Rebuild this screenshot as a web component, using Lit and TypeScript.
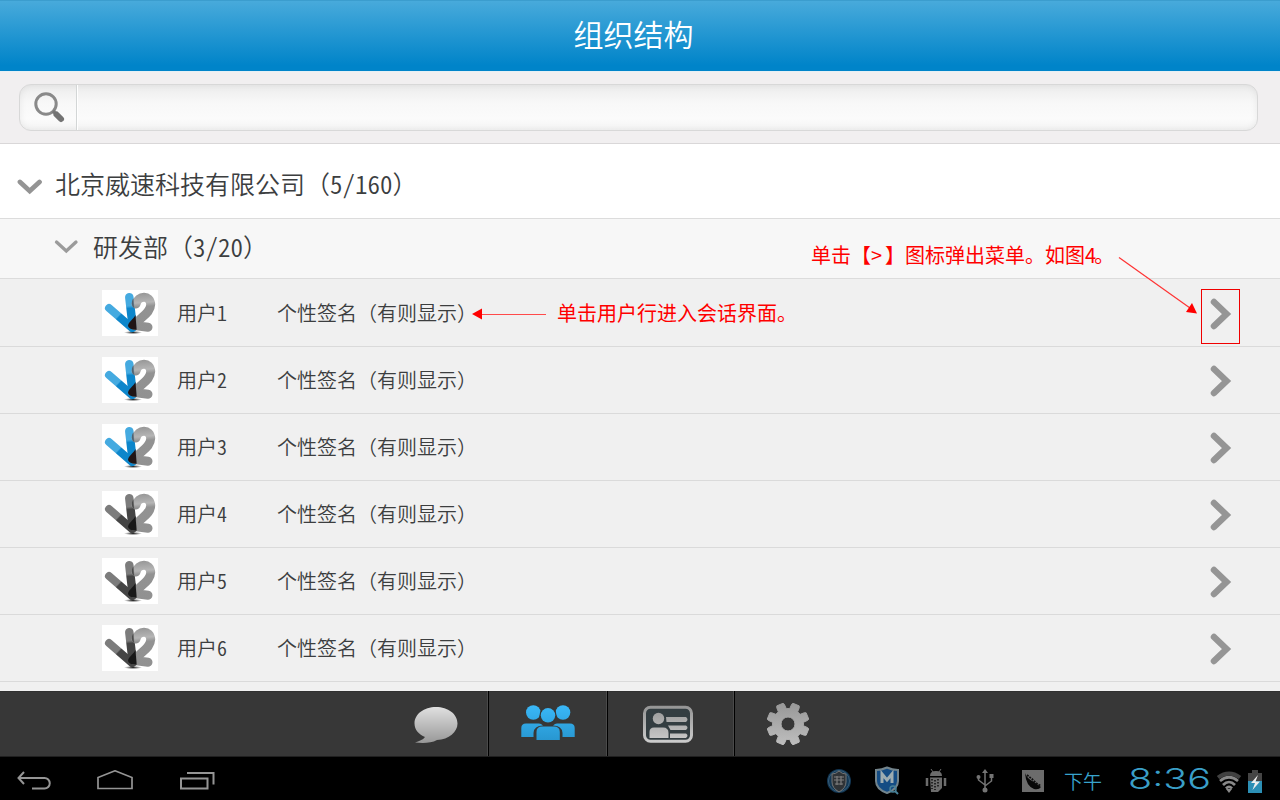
import { LitElement, html, css } from "lit";
import { customElement, property } from "lit/decorators.js";

@customElement("v2-logo")
class V2Logo extends LitElement {
  @property({ type: Boolean }) online = false;
  static styles = css`:host { display: block; width: 56px; height: 46px; background: #fff; } svg { display: block; }`;
  render() {
    const a = this.online ? "#45aae0" : "#7c7c7c";
    const b = this.online ? "#0d86cb" : "#454545";
    return html`<svg width="56" height="46" viewBox="0 0 56 46" fill="none" stroke-linecap="round" stroke-linejoin="round">
      <defs>
        <linearGradient id="l" gradientUnits="userSpaceOnUse" x1="6" y1="17" x2="29" y2="39">
          <stop offset=".42" stop-color=${a} /><stop offset=".47" stop-color=${b} />
        </linearGradient>
        <linearGradient id="r" gradientUnits="userSpaceOnUse" x1="26" y1="4" x2="29" y2="40">
          <stop offset=".33" stop-color=${a} /><stop offset=".4" stop-color=${b} />
        </linearGradient>
        <linearGradient id="g" gradientUnits="userSpaceOnUse" x1="40" y1="3" x2="43" y2="41">
          <stop offset="0" stop-color="#8c8c8c" /><stop offset=".25" stop-color="#adadad" />
          <stop offset=".36" stop-color="#868686" /><stop offset="1" stop-color="#858585" />
        </linearGradient>
        <radialGradient id="s"><stop offset="0" stop-color="#222" /><stop offset="1" stop-color="#222" stop-opacity="0" /></radialGradient>
      </defs>
      <ellipse cx="31" cy="42.500" rx="9" ry="1.600" fill="url(#s)" />
      <path d="M7 18L30 38" stroke="url(#l)" stroke-width="8" />
      <path d="M27.300 7.200L30.800 37.500" stroke="url(#r)" stroke-width="8.500" />
      <path d="M34 14C36 5.500 48.300 4.500 48.700 14.500C48.500 23.500 38 27 32.500 35.500L46 37.200" stroke="url(#g)" stroke-width="9" opacity=".9" />
      <path d="M29.800 13.500C29.900 10.500 30.600 9.200 31.400 8.500L32 18Q29.800 16.500 29.800 13.500Z" fill=${this.online ? "#4d6272" : "#4c4c4c"} />
      <path d="M33.500 25C31.500 29 26 32.500 26 36Q27 39.800 34.600 39.700Z" fill=${this.online ? "#201516" : "#181818"} />
    </svg>`;
  }
}

@customElement("user-row")
class UserRow extends LitElement {
  @property() name = "";
  @property() num = "";
  @property({ type: Boolean }) online = false;
  static styles = css`
    :host { display: flex; align-items: center; box-sizing: border-box; height: 67px; padding: 0 48px 0 102px; border-bottom: 1px solid #dadada; }
    .name { width: 100px; margin-left: 19px; }
    .sign { flex: 1; }
    .name, .sign { font-size: 20px; font-weight: 350; line-height: 28px; color: #3c3e3f; white-space: nowrap; }
    .half { font-feature-settings: "hwid"; }
    svg { display: block; margin-top: 2px; }
  `;
  render() {
    return html`<v2-logo ?online=${this.online}></v2-logo>
      <div class="name">${this.name}<span class="half">${this.num}</span></div>
      <div class="sign">个性签名（有则显示）</div>
      <svg width="22" height="32" viewBox="0 0 22 32" fill="none"><path d="M4 4L16.500 16L4 28" stroke="#959595" stroke-width="6.500" stroke-linecap="round" /></svg>`;
  }
}

const gear = () => {
  const pts: string[] = [];
  for (let i = 0; i < 8; i++) {
    const c = 22.5 + i * 45;
    for (const [d, r] of [[-16, 15.5], [-12, 20], [-9, 21.3], [9, 21.3], [12, 20], [16, 15.5]]) {
      const t = ((c + d) * Math.PI) / 180;
      pts.push(`${(22 + r * Math.sin(t)).toFixed(2)} ${(22 - r * Math.cos(t)).toFixed(2)}`);
    }
  }
  return "M" + pts.join("L") + "ZM29 22a7 7 0 1 0-14 0a7 7 0 1 0 14 0Z";
};

@customElement("app-root")
class AppRoot extends LitElement {
  static styles = css`
    :host { display: flex; flex-direction: column; position: relative; width: 1280px; height: 800px; overflow: hidden; background: #f0f0f0; font-family: "Noto Sans CJK SC", sans-serif; font-weight: 400; }
    * { box-sizing: border-box; }
    svg { display: block; }
    header { height: 71px; flex: none; background: linear-gradient(#48aadb, #0084c9 92%); border-top: 1px solid #3b9dce; color: #fff; font-size: 30px; font-weight: 350; line-height: 64px; text-align: center; padding-right: 13px; }
    .search { height: 73px; flex: none; background: #f1eff0; padding: 12px 22px 12px 19px; border-bottom: 1px solid #d9d7d8; border-top: 1px solid #e5f0f5; }
    .box { display: flex; height: 47px; width: 1239px; border: 1px solid #d8d8d8; border-radius: 12px; background: linear-gradient(#ececec, #f8f8f8 40%, #fbfbfb 75%, #f4f4f4); box-shadow: inset 0 0 7px rgba(0,0,0,.07); }
    .glass { width: 57px; border-right: 1px solid #d3d6d6; padding: 7px 0 0 14px; }
    .gap { border-left: 1px solid #fff; flex: 1; }
    .company, .dept { display: flex; align-items: center; font-size: 25px; font-weight: 350; color: #3c3e3f; border-bottom: 1px solid #dcdcdc; flex: none; white-space: nowrap; }
    .half { font-feature-settings: "hwid"; }
    .company { height: 75px; background: #fff; padding: 3px 0 0 17px; }
    .company svg { margin-top: 9px; }
    .label { margin-left: 12px; }
    .dept { height: 60px; background: #f7f7f7; padding: 0 0 6px 54px; }
    .dept svg { margin-top: 3px; }
    .dept .label { margin-left: 14px; }
    .rows { flex: 1; min-height: 0; padding-top: 1px; }
    .tabs { height: 66px; flex: none; display: flex; background: #373737; padding-left: 383px; border-bottom: 1px solid #202020; box-shadow: inset 0 1px #303030; }
    .tab { display: flex; align-items: center; justify-content: center; border-right: 1px solid #000; box-shadow: inset -1px 0 #4a4a4a; }
    .tab:last-child { border: 0; box-shadow: none; }
    .chat { width: 106px; padding-top: 2px; }
    .people { width: 119px; padding-bottom: 4px; }
    .card { width: 127px; padding-right: 7px; }
    .gear { width: 106px; padding-top: 1px; }
    .sys { height: 43px; flex: none; background: #000; display: flex; align-items: center; padding: 6px 17px 0 16px; }
    .sp { flex: 1; }
    .status { margin-bottom: 2px; opacity: .88; }
    .ampm { font-size: 19px; line-height: 28px; color: #38a3cc; font-weight: 350; width: 39px; margin: 0 26px 2px 19px; white-space: nowrap; }
    .note { position: absolute; color: #f00; font-size: 20px; line-height: 28px; white-space: nowrap; }
    .gt { letter-spacing: 3px; }
    .four { letter-spacing: -2px; }
    .n1 { left: 811px; top: 241px; }
    .n2 { left: 557px; top: 299px; }
    .over { position: absolute; left: 0; top: 0; pointer-events: none; }
  `;
  render() {
    return html`
      <header>组织结构</header>
      <div class="search"><div class="box">
        <div class="glass"><svg width="32" height="32" viewBox="0 0 32 32" fill="none">
          <circle cx="12" cy="12" r="10.200" stroke="#898989" stroke-width="3" />
          <path d="M19 19L22 22" stroke="#777" stroke-width="3.200" />
          <path d="M22.500 22.500L27 27" stroke="#737373" stroke-width="6" stroke-linecap="round" /></svg></div>
        <div class="gap"></div>
      </div></div>
      <div class="company"><svg width="26" height="18" viewBox="0 0 26 18" fill="none"><path d="M3 4L12.700 13L22.500 4" stroke="#949494" stroke-width="4.800" stroke-linecap="round" /></svg><span class="label">北京威速科技有限公司（<span class="half">5/160</span>）</span></div>
      <div class="dept"><svg width="25" height="18" viewBox="0 0 25 18" fill="none"><path d="M2.500 4L12.300 13L22 4" stroke="#9b9b9b" stroke-width="3.300" stroke-linecap="round" /></svg><span class="label">研发部（<span class="half">3/20</span>）</span></div>
      <div class="rows">${[1, 2, 3, 4, 5, 6].map((n) => html`<user-row .name=${"用户"} .num=${String(n)} .online=${n < 4}></user-row>`)}</div>
      <div class="tabs">
        <div class="tab chat"><svg width="44" height="38" viewBox="0 0 44 38"><defs><linearGradient id="cg" x1="0" y1="0" x2="0" y2="1"><stop stop-color="#e0e0e0" /><stop offset="1" stop-color="#989898" /></linearGradient></defs>
          <path d="M22 1C10 1 .500 8 .500 17.500C.500 24 5 28.500 11 31C9 34 5 35 1 36.500C8 37.300 17 37.500 23 34C35 33.500 43.500 26 43.500 17.500C43.500 8 34 1 22 1Z" fill="url(#cg)" /></svg></div>
        <div class="tab people"><svg width="54" height="38" viewBox="0 0 54 38"><defs><linearGradient id="pg" gradientUnits="userSpaceOnUse" x1="0" y1="0" x2="0" y2="38"><stop stop-color="#3bbafa" /><stop offset="1" stop-color="#2796d0" /></linearGradient></defs>
          <g fill="url(#pg)"><circle cx="12.300" cy="9.500" r="7.300" /><circle cx="42" cy="9.500" r="7.300" />
          <path d="M.300 34V25Q.300 20.500 5 20.500H18Q20 20.500 22 22.500Q13 22.500 12.500 30V34ZM53.700 34V25Q53.700 20.500 49 20.500H36Q34 20.500 32 22.500Q41 22.500 41.500 30V34Z" />
          <circle cx="27" cy="12.300" r="8.500" fill="#373737" /><circle cx="27" cy="12.300" r="7.200" />
          <path d="M15.500 37V29Q15.500 23.500 21 23.500H33Q38.800 23.500 38.800 29V37Z" /></g></svg></div>
        <div class="tab card"><svg width="50" height="38" viewBox="0 0 50 38"><defs><linearGradient id="ig" gradientUnits="userSpaceOnUse" x1="0" y1="0" x2="0" y2="38"><stop stop-color="#939393" /><stop offset="1" stop-color="#cdcdcd" /></linearGradient></defs>
          <rect x="1.500" y="2.300" width="47" height="34" rx="6" fill="#333d41" stroke="url(#ig)" stroke-width="3" />
          <g fill="url(#ig)"><circle cx="15.500" cy="13.500" r="5.700" /><path d="M6.500 33V27Q6.500 22.500 11 22.500H20Q25.500 22.500 25.500 28V33Z" />
          <path d="M23 12H43Q46 14.500 43 17H23.500ZM25 20.500H43Q46 22.700 43 25H27.500ZM27 28.500H43Q46 30.700 43 33H27Z" /></g></svg></div>
        <div class="tab gear"><svg width="44" height="44" viewBox="0 0 44 44"><defs><linearGradient id="gg" x1="0" y1="0" x2="0" y2="1"><stop stop-color="#989898" /><stop offset="1" stop-color="#bebebe" /></linearGradient></defs><path d=${gear()} fill="url(#gg)" stroke="url(#gg)" stroke-width="1" stroke-linejoin="round" fill-rule="evenodd" /></svg></div>
      </div>
      <div class="sys">
        <svg width="200" height="24" viewBox="0 0 200 24" fill="none" stroke="#959595" stroke-width="2">
          <path d="M8 2L2.500 8L8 14M3 8H28.500A5.200 5.200 0 0 1 28.500 18.500H16" />
          <path d="M82 18.500V7.500L99 .800L116 7.500V18.500Z" stroke-width="1.700" />
          <path d="M165 8.500H191.500V18.500H165ZM171 3H197.500V14.500" /></svg>
        <div class="sp"></div>
        <svg class="status" width="218" height="30" viewBox="0 0 218 30" fill="none">
          <circle cx="12" cy="15" r="12" fill="#163f60" /><circle cx="12" cy="15" r="10.500" stroke="#416b88" />
          <path d="M5 8Q9 8 12 5Q15 8 19 8V16Q19 22 12 26Q5 22 5 16Z" fill="#363b3f" stroke="#858585" /><path d="M7 11H17M7 14H17M8 18H16M10 10V19M14 10V19" stroke="#909090" stroke-width="1.200" />
          <path d="M49 4Q55 4 60 1.500Q65 4 71 4V15Q71 23 60 27Q49 23 49 15Z" fill="#175797" stroke="#8397a0" stroke-width="2" />
          <path d="M55 17V8L60 14L65 8V17" stroke="#b3c4ca" stroke-width="3" /><circle cx="66" cy="23" r="3" stroke="#5393ad" stroke-width="1.500" /><path d="M68 25L71 28" stroke="#5393ad" stroke-width="2" />
          <path d="M103 10Q103 5 109 5Q115 5 115 10Z" fill="#7c7c7c" /><path d="M104 3L106 6M114 3L112 6" stroke="#7c7c7c" /><path d="M100 12V20M118 12V20" stroke="#7c7c7c" stroke-width="2.500" />
          <path d="M103 11.500H115V22L111 26H104Z" fill="#7c7c7c" /><path d="M105 13V23M108 14V24M111 13V21" stroke="#111" stroke-width="1.500" stroke-dasharray="1.500 1.500" />
          <path d="M158 5V24M151.500 11V14L158 19M164.500 10V15L158 20" stroke="#858585" stroke-width="1.500" /><path d="M155 7L158 3L161 7Z" fill="#858585" /><circle cx="158" cy="24" r="2.500" fill="#858585" /><circle cx="151.500" cy="11" r="2" fill="#858585" /><path d="M162.500 8H166.500V12H162.500Z" fill="#858585" />
          <path d="M195 4H217V26H195Z" fill="#7c7c7c" /><path d="M198 7Q200 13 207 16L214 21Q212 24 207 23Q199 20 198 7Z" fill="#080808" /><path d="M200 9L205 13L209 17L214 20" stroke="#111" stroke-width="1.800" stroke-dasharray="2 1" />
        </svg>
        <div class="ampm">下午</div>
        <svg width="84" height="42" viewBox="0 0 84 42"><text x="-1" y="27.500" textLength="83" lengthAdjust="spacingAndGlyphs" font-family="Inter, sans-serif" font-weight="300" font-size="29" fill="#3a9fc8">8:36</text></svg>
        <svg width="50" height="30" viewBox="0 0 50 30" fill="none">
          <path d="M5 10.500Q16 2.500 27 10.500" stroke="#414141" stroke-width="4" /><path d="M7 14Q16 6.500 25 14M10 18Q16 12 22 18M13 21.500Q16 18.500 19 21.500" stroke="#898989" stroke-width="2.700" /><path d="M13 22L16 26L19 22Z" fill="#898989" />
          <path d="M39 3H45V6H49V15H35V6H39Z" fill="#454545" /><path d="M35 14H49V26H35Z" fill="#2c8fb5" /><path d="M45 8L38 16H42L39.500 23L47 14.500H42.500Z" fill="#eee" />
        </svg>
      </div>
      <div class="note n1">单击【<span class="gt">&gt;</span>】图标弹出菜单。如图<span class="four">4</span>。</div>
      <div class="note n2">单击用户行进入会话界面。</div>
      <svg class="over" width="1280" height="400" fill="none">
        <path d="M482 314.500H546" stroke="#ff4a4a" stroke-width="1.200" /><path d="M472 314L482 308.500V319.500Z" fill="#f00" />
        <path d="M1119 257.500L1190 308" stroke="#f33" stroke-width="1.200" /><path d="M1197 313.500L1192 303L1186 312Z" fill="#f00" />
        <rect x="1201.500" y="289.500" width="38" height="54" stroke="#f00000" />
      </svg>`;
  }
}
